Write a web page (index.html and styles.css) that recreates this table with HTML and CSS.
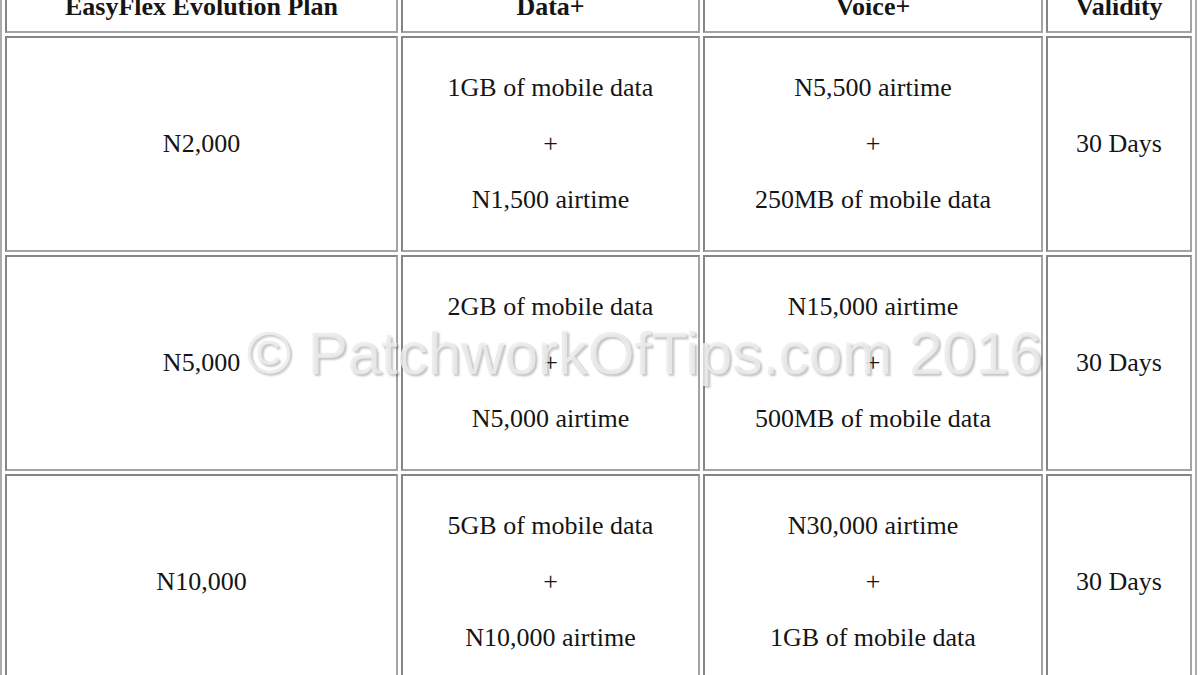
FILE: index.html
```html
<!DOCTYPE html>
<html>
<head>
<meta charset="utf-8">
<title>EasyFlex Evolution Plan</title>
<link rel="stylesheet" href="styles.css">
</head>
<body>
<div class="page">
  <table class="plans">
    <colgroup>
      <col class="c-plan">
      <col class="c-data">
      <col class="c-voice">
      <col class="c-valid">
    </colgroup>
    <thead>
      <tr>
        <th>EasyFlex Evolution Plan</th>
        <th>Data+</th>
        <th>Voice+</th>
        <th>Validity</th>
      </tr>
    </thead>
    <tbody>
      <tr>
        <td>N2,000</td>
        <td><p>1GB of mobile data</p><p>+</p><p>N1,500 airtime</p></td>
        <td><p>N5,500 airtime</p><p>+</p><p>250MB of mobile data</p></td>
        <td>30 Days</td>
      </tr>
      <tr>
        <td>N5,000</td>
        <td><p>2GB of mobile data</p><p>+</p><p>N5,000 airtime</p></td>
        <td><p>N15,000 airtime</p><p>+</p><p>500MB of mobile data</p></td>
        <td>30 Days</td>
      </tr>
      <tr>
        <td>N10,000</td>
        <td><p>5GB of mobile data</p><p>+</p><p>N10,000 airtime</p></td>
        <td><p>N30,000 airtime</p><p>+</p><p>1GB of mobile data</p></td>
        <td>30 Days</td>
      </tr>
    </tbody>
  </table>
  <div class="watermark">© PatchworkOfTips.com 2016</div>
</div>
</body>
</html>
```
FILE: styles.css
```css
html, body {
  margin: 0;
  padding: 0;
  background: #ffffff;
  overflow: hidden;
}

.page {
  position: relative;
  width: 1200px;
  height: 675px;
  overflow: hidden;
}

.plans {
  margin-top: -24px;
  width: 1197px;
  table-layout: fixed;
  border-collapse: separate;
  border-spacing: 3px;
  border: 2px solid #acacac;
  font-family: "Liberation Serif", "Times New Roman", serif;
  font-size: 26px;
  line-height: 30px;
  color: #151515;
}

.c-plan { width: 393px; }
.c-data { width: 299px; }
.c-voice { width: 340px; }
.c-valid { width: 146px; }

.plans th,
.plans td {
  box-sizing: border-box;
  padding: 9px;
  text-align: center;
  vertical-align: middle;
  border-style: solid;
  border-width: 2px;
  border-color: #858585 #a3a3a3 #a3a3a3 #858585;
}

.plans th {
  font-weight: bold;
}

.plans p {
  margin: 26px 0;
}

.watermark {
  position: absolute;
  left: 247px;
  top: 324px;
  font-family: "Liberation Sans", Arial, sans-serif;
  font-size: 60px;
  line-height: 60px;
  white-space: nowrap;
  color: rgba(245, 245, 245, 0.82);
  text-shadow: 2px 2px 2px rgba(0, 0, 0, 0.22), 0 0 1px rgba(0, 0, 0, 0.18);
}
```
